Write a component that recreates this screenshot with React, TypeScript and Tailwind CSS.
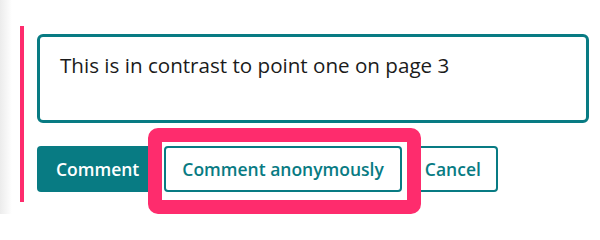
export default function App() {
  return (
    <div className="relative w-[600px] h-[214px] overflow-hidden bg-white font-['Open_Sans',sans-serif]">
      {/* soft page edge */}
      <div className="absolute left-0 top-0 h-full w-[12px] bg-gradient-to-r from-[#ececec] to-white" />

      <div className="relative pl-[20px] pt-[26px]">
        <div className="border-l-4 border-[#fe2c6d] pl-[13px] pt-[8px] pb-[10px]">
          <textarea
            readOnly
            defaultValue="This is in contrast to point one on page 3"
            className="block w-[552px] h-[89px] resize-none rounded-md border-[3px] border-[#087b83] px-[20px] pt-[14px] text-[20.6px] leading-[28px] text-[#1b1b1b] outline-none"
          />

          <div className="mt-[23px] flex gap-[6px]">
            <button className="h-[46px] rounded bg-[#087b83] px-[19px] text-[17.5px] font-semibold text-white">
              Comment
            </button>
            <button className="h-[46px] rounded border-2 border-[#087b83] bg-white px-[16px] text-[17.5px] font-semibold text-[#087b83]">
              Comment anonymously
            </button>
            <button className="h-[46px] rounded border-2 border-[#087b83] bg-white px-[15px] text-[17.5px] font-semibold text-[#087b83]">
              Cancel
            </button>
          </div>
        </div>
      </div>

      {/* highlight */}
      <div className="pointer-events-none absolute left-[148px] top-[128px] h-[86px] w-[273px] rounded-[10px] border-[14px] border-[#fe2c6d]" />
    </div>
  );
}
